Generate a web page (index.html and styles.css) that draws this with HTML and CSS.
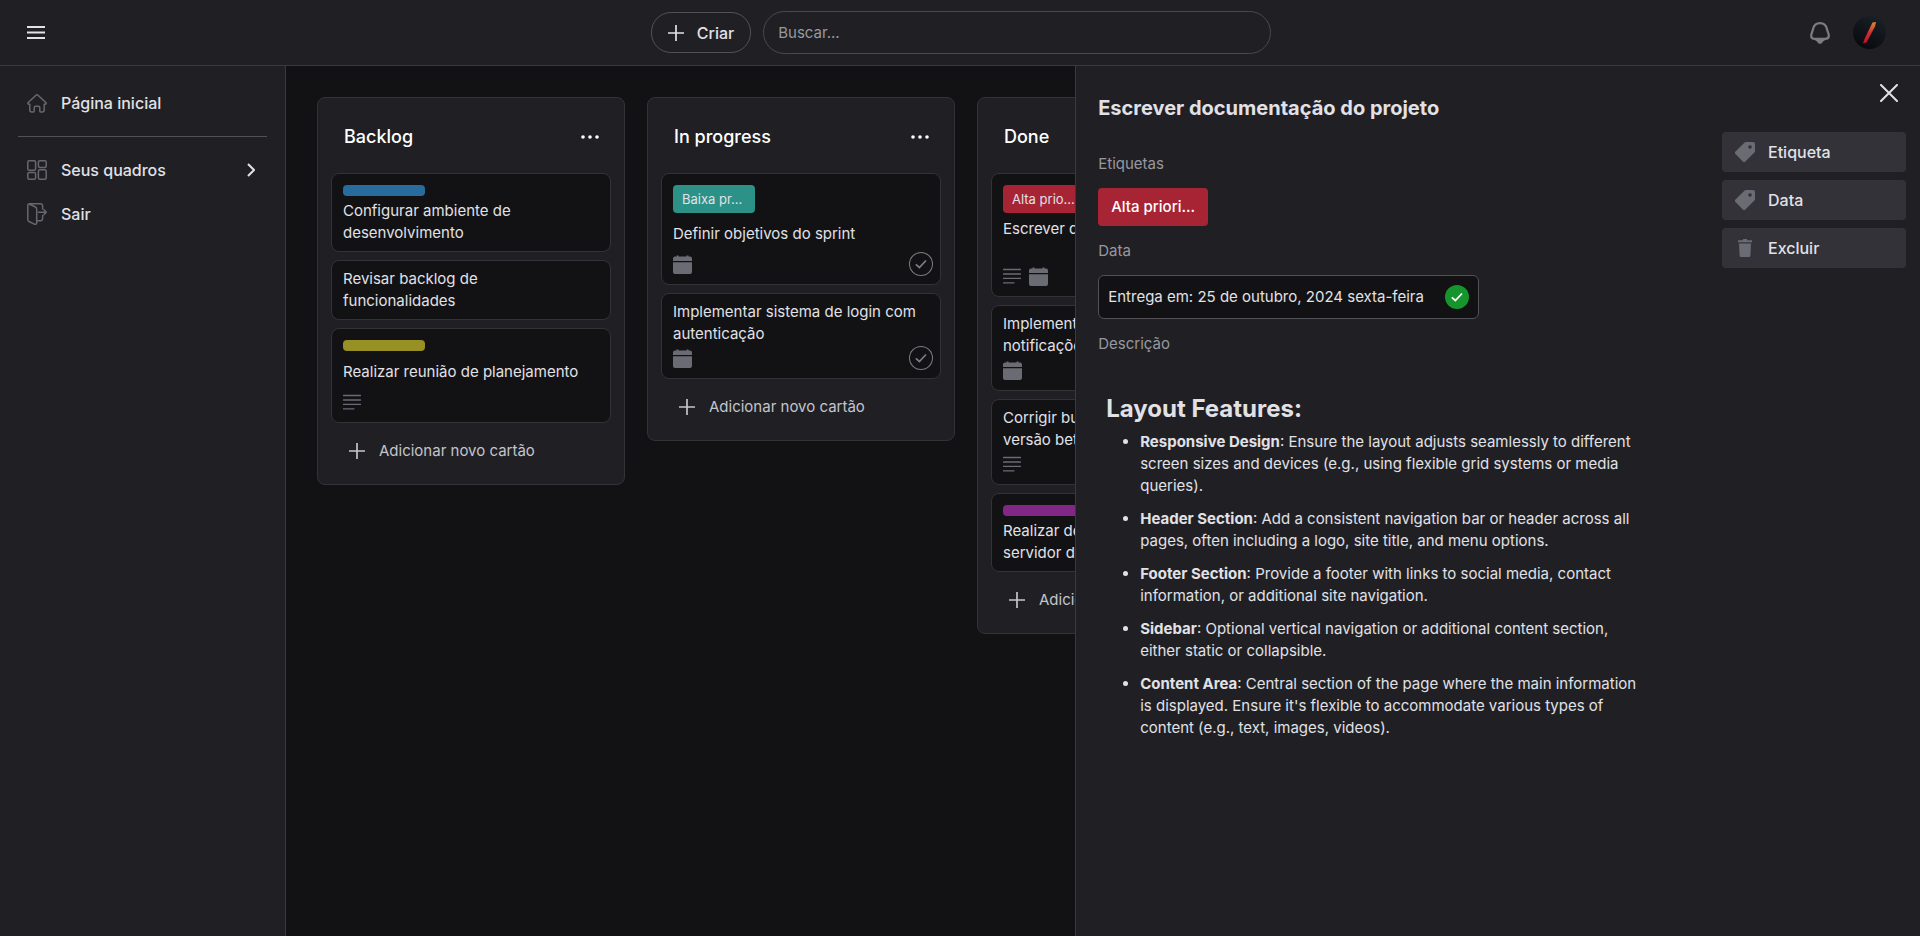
FILE: index.html
```html
<!DOCTYPE html>
<html lang="pt-BR">
<head>
<meta charset="utf-8">
<title>Quadro</title>
<link rel="stylesheet" href="styles.css">
</head>
<body>
<svg class="sprite" aria-hidden="true">
  <symbol id="plus" viewBox="0 0 16 16"><path d="M8 0v16M0 8h16" fill="none" stroke="currentColor" stroke-width="1.700"/></symbol>
  <symbol id="dots" viewBox="0 0 18 4"><circle cx="2" cy="2" r="1.800"/><circle cx="9" cy="2" r="1.800"/><circle cx="16" cy="2" r="1.800"/></symbol>
  <symbol id="lines" viewBox="0 0 18 16"><path d="M.5 1.500h17M.5 6h17M.5 10.300h17M.5 14.800h10.500" fill="none" stroke="currentColor" stroke-width="1.300" stroke-linecap="round"/></symbol>
  <symbol id="calendar" viewBox="0 0 19 19"><path d="M0 6V3.500A2 2 0 0 1 2 1.500h1.500V.5h2v1h8v-1h2v1H17a2 2 0 0 1 2 2V6zM0 7.200h19V17a2 2 0 0 1-2 2H2a2 2 0 0 1-2-2z"/></symbol>
  <symbol id="check" viewBox="0 0 24 24"><path d="M6.800 12.300l3.600 3.200L17 8.500" fill="none" stroke="currentColor" stroke-width="1.700"/></symbol>
  <symbol id="tag" viewBox="0 0 20 20"><path fill-rule="evenodd" d="M11 0h7a2 2 0 0 1 2 2v7q0 .8-.6 1.400l-9 9a1.800 1.800 0 0 1-2.600 0L.5 12.100a1.800 1.800 0 0 1 0-2.600L9.600.6Q10.200 0 11 0zM15 3.200a1.800 1.800 0 1 0 0 3.600 1.800 1.800 0 0 0 0-3.600z"/></symbol>
  <symbol id="trash" viewBox="0 0 14 18"><path d="M5 0h4v1.300h5v2H0v-2h5zM1 4.500h12l-.6 12a1.500 1.500 0 0 1-1.500 1.500H3.100a1.500 1.500 0 0 1-1.500-1.500z"/></symbol>
</svg>

<header class="topbar">
  <button class="icon-button" aria-label="Menu">
    <svg width="18" height="13" viewBox="0 0 18 13"><path d="M0 1h18M0 6.500h18M0 12h18" stroke="currentColor" stroke-width="1.800"/></svg>
  </button>
  <div class="topbar-center">
    <button class="create"><svg width="16" height="16"><use href="#plus"/></svg>Criar</button>
    <input class="search" type="search" placeholder="Buscar..." aria-label="Buscar">
  </div>
  <div class="topbar-user">
    <button class="icon-button bell" aria-label="Notificações">
      <svg width="20" height="22" viewBox="0 0 20 22"><path d="M10 1.200C6 1.200 3.700 3.800 2.900 7.500 2.300 10.300 1.200 11.500 1.200 13.700c0 2.300 1.500 3.200 3.800 3.200h10c2.300 0 3.800-.9 3.800-3.200 0-2.200-1.100-3.400-1.700-6.200C16.300 3.800 14 1.200 10 1.200z" fill="none" stroke="currentColor" stroke-width="2.200"/><path d="M3.500 16h13q-1 2.800-3.800 3.800c-.8 2.700-4.600 2.700-5.400 0Q4.500 18.800 3.500 16z" fill="currentColor"/></svg>
    </button>
    <button class="icon-button" aria-label="Perfil">
      <svg width="33" height="33" viewBox="0 0 33 33"><defs><linearGradient id="night" x1=".8" y1="0" x2=".3" y2="1"><stop offset="0" stop-color="#1b2129"/><stop offset="1" stop-color="#07090c"/></linearGradient><linearGradient id="flame" x1="0" y1="0" x2="0" y2="1"><stop offset="0" stop-color="#d98a35"/><stop offset=".5" stop-color="#d03030"/><stop offset="1" stop-color="#c00d2c"/></linearGradient></defs><circle cx="16.500" cy="16.500" r="16.500" fill="url(#night)"/><path d="M19.500 6.500l3.500-.5-1 4.500-8.500 16-3.500.8 1.500-4.300z" fill="url(#flame)"/></svg>
    </button>
  </div>
</header>

<div class="workspace">
  <nav class="sidebar">
    <a class="nav-link" href="#"><span class="nav-icon"><svg width="20" height="19" viewBox="0 0 20 19"><path d="M9 1.200a1.500 1.500 0 0 1 2 0l7.800 7.300c.7.700.2 1.700-.7 1.700h-.9v5.800a2 2 0 0 1-2 2h-1.400a1 1 0 0 1-1-1v-3.200a1.500 1.500 0 0 0-1.500-1.500H8.700a1.500 1.500 0 0 0-1.500 1.500V17a1 1 0 0 1-1 1H4.800a2 2 0 0 1-2-2v-5.800h-.9c-.9 0-1.400-1-.7-1.700z"/></svg></span>Página inicial</a>
    <hr class="divider">
    <a class="nav-link" href="#"><span class="nav-icon"><svg width="20" height="20" viewBox="0 0 20 20"><rect x=".8" y=".8" width="7.800" height="9.400" rx="1.500"/><rect x="11.400" y=".8" width="7.800" height="6.600" rx="1.500"/><rect x=".8" y="12.600" width="7.800" height="6.600" rx="1.500"/><rect x="11.400" y="9.800" width="7.800" height="9.400" rx="1.500"/></svg></span>Seus quadros<svg class="chevron" width="8" height="14" viewBox="0 0 8 14"><path d="M1 1l6 6-6 6"/></svg></a>
    <a class="nav-link" href="#"><span class="nav-icon"><svg width="20" height="22" viewBox="0 0 20 22"><path d="M2.600.8h11a2 2 0 0 1 2 2V6M15.600 12.500v3.200a2 2 0 0 1-2 2H9.700M2 1l6 2.700q1.700.8 1.700 2.500v13.300c0 1.500-1 2.200-2.300 1.600l-5-2.300Q.8 18 .8 16.200V2.400Q.8.800 2.600.8M11.500 9.200h7.700M17 6.800l2.300 2.400L17 11.600"/></svg></span>Sair</a>
  </nav>

  <main class="board">
    <section class="column">
      <header class="column-head"><h2>Backlog</h2><button class="icon-button" aria-label="Opções"><svg width="18" height="4" fill="currentColor"><use href="#dots"/></svg></button></header>
      <article class="card"><span class="label bar blue"></span><p class="card-title">Configurar ambiente de desenvolvimento</p></article>
      <article class="card"><p class="card-title">Revisar backlog de<br>funcionalidades</p></article>
      <article class="card"><span class="label bar olive"></span><p class="card-title single">Realizar reunião de planejamento</p><div class="card-foot"><svg width="18" height="16"><use href="#lines"/></svg></div></article>
      <button class="add-card"><svg width="16" height="16"><use href="#plus"/></svg>Adicionar novo cartão</button>
    </section>

    <section class="column">
      <header class="column-head"><h2>In progress</h2><button class="icon-button" aria-label="Opções"><svg width="18" height="4" fill="currentColor"><use href="#dots"/></svg></button></header>
      <article class="card"><span class="label teal">Baixa pr...</span><p class="card-title single">Definir objetivos do sprint</p><div class="card-foot"><svg width="19" height="19" fill="currentColor"><use href="#calendar"/></svg><button class="done-toggle" aria-label="Concluir"><svg width="24" height="24"><use href="#check"/></svg></button></div></article>
      <article class="card"><p class="card-title">Implementar sistema de login com autenticação</p><div class="card-foot"><svg width="19" height="19" fill="currentColor"><use href="#calendar"/></svg><button class="done-toggle" aria-label="Concluir"><svg width="24" height="24"><use href="#check"/></svg></button></div></article>
      <button class="add-card"><svg width="16" height="16"><use href="#plus"/></svg>Adicionar novo cartão</button>
    </section>

    <section class="column">
      <header class="column-head"><h2>Done</h2></header>
      <article class="card"><span class="label red">Alta prio...</span><p class="card-title tall">Escrever documentação do projeto</p><div class="card-foot"><svg width="18" height="16"><use href="#lines"/></svg><svg width="19" height="19" fill="currentColor"><use href="#calendar"/></svg></div></article>
      <article class="card"><p class="card-title">Implementar<br>notificações</p><div class="card-foot"><svg width="19" height="19" fill="currentColor"><use href="#calendar"/></svg></div></article>
      <article class="card"><p class="card-title">Corrigir bugs<br>versão beta</p><div class="card-foot"><svg width="18" height="16"><use href="#lines"/></svg></div></article>
      <article class="card"><span class="label bar purple"></span><p class="card-title">Realizar deploy<br>servidor de</p></article>
      <button class="add-card"><svg width="16" height="16"><use href="#plus"/></svg>Adicionar novo cartão</button>
    </section>
  </main>

  <aside class="drawer">
    <div class="details">
      <h1>Escrever documentação do projeto</h1>
      <h3 class="field">Etiquetas</h3>
      <span class="tag red">Alta priori...</span>
      <h3 class="field">Data</h3>
      <div class="due">Entrega em: 25 de outubro, 2024 sexta-feira<button class="done-toggle checked" aria-label="Concluído"><svg width="24" height="24"><use href="#check"/></svg></button></div>
      <h3 class="field">Descrição</h3>
      <div class="description">
        <h2>Layout Features:</h2>
        <ul>
          <li><strong>Responsive Design</strong>: Ensure the layout adjusts seamlessly to different screen sizes and devices (e.g., using flexible grid systems or media queries).</li>
          <li><strong>Header Section</strong>: Add a consistent navigation bar or header across all pages, often including a logo, site title, and menu options.</li>
          <li><strong>Footer Section</strong>: Provide a footer with links to social media, contact information, or additional site navigation.</li>
          <li><strong>Sidebar</strong>: Optional vertical navigation or additional content section, either static or collapsible.</li>
          <li><strong>Content Area</strong>: Central section of the page where the main information is displayed. Ensure it's flexible to accommodate various types of content (e.g., text, images, videos).</li>
        </ul>
      </div>
    </div>
    <div class="actions">
      <button class="icon-button close" aria-label="Fechar"><svg width="18" height="18" viewBox="0 0 18 18"><path d="M1 1l16 16M17 1L1 17" stroke="currentColor" stroke-width="2" stroke-linecap="round"/></svg></button>
      <button class="action"><svg width="20" height="20"><use href="#tag"/></svg>Etiqueta</button>
      <button class="action"><svg width="20" height="20"><use href="#tag"/></svg>Data</button>
      <button class="action"><svg width="20" height="18"><use href="#trash"/></svg>Excluir</button>
    </div>
  </aside>
</div>
</body>
</html>
```
FILE: styles.css
```css
* { box-sizing: border-box; }

body {
  margin: 0;
  height: 100vh;
  display: flex;
  flex-direction: column;
  overflow: hidden;
  background: #121214;
  color: #e1e1e6;
  font: 15px/22px Inter, "Liberation Sans", sans-serif;
}

h1, h2, h3, p, ul { margin: 0; padding: 0; }
button { font: inherit; color: inherit; cursor: pointer; }
svg { flex: none; display: block; }

.sprite { position: absolute; width: 0; height: 0; }

.icon-button {
  display: flex;
  padding: 0;
  border: 0;
  background: none;
}

/* Top bar */
.topbar {
  display: grid;
  grid-template-columns: 1fr auto 1fr;
  align-items: center;
  height: 66px;
  padding: 0 34px 0 27px;
  background: #202024;
  border-bottom: 1px solid #3a3a3e;
}

.topbar-center { display: flex; align-items: center; gap: 12px; margin-left: 9px; }

.create {
  display: flex;
  align-items: center;
  gap: 13px;
  height: 41px;
  padding: 0 16px;
  border: 1px solid #515156;
  border-radius: 20px;
  background: none;
  font-size: 16px;
  font-weight: 500;
}

.search {
  width: 508px;
  height: 43px;
  padding: 0 14px;
  border: 1px solid #4a4a4e;
  border-radius: 22px;
  background: none;
  color: inherit;
  font: inherit;
}
.search::placeholder { color: #98989f; opacity: 1; }

.topbar-user { display: flex; align-items: center; justify-content: flex-end; gap: 23px; }
.bell { color: #7c7c82; }

/* Page body */
.workspace {
  flex: 1;
  min-height: 0;
  display: flex;
}

.sidebar {
  flex: none;
  width: 286px;
  padding: 15px 18px;
  background: #202024;
  border-right: 1px solid #3a3a3e;
}

.nav-link {
  display: flex;
  align-items: center;
  gap: 14px;
  height: 44px;
  padding: 0 12px 0 9px;
  color: inherit;
  font-size: 16px;
  font-weight: 500;
  text-decoration: none;
}

.nav-icon svg { fill: none; stroke: #67676f; stroke-width: 1.5; stroke-linejoin: round; stroke-linecap: round; }
.chevron { margin-left: auto; fill: none; stroke: currentColor; stroke-width: 2; }
.divider { height: 1px; margin: 11px 0; border: 0; background: #515156; }

/* Board */
.board {
  flex: 1;
  min-width: 0;
  display: flex;
  align-items: flex-start;
  gap: 22px;
  padding: 31px;
  overflow: hidden;
}

.column {
  flex: none;
  width: 308px;
  display: flex;
  flex-direction: column;
  gap: 8px;
  padding: 13px;
  background: #202024;
  border: 1px solid #333337;
  border-radius: 8px;
}

.column-head {
  display: flex;
  align-items: center;
  justify-content: space-between;
  height: 54px;
  padding: 0 12px 2px 13px;
  color: #fff;
}
.column-head h2 { font-size: 18px; font-weight: 500; }

.card {
  padding: 3px 11px 7px;
  background: #121214;
  border: 1px solid #333337;
  border-radius: 8px;
}

.label {
  display: block;
  width: 82px;
  height: 28px;
  margin-top: 8px;
  padding: 0 9px;
  border-radius: 4px;
  font-size: 13px;
  line-height: 28px;
  white-space: nowrap;
}
.bar { height: 11px; }

.blue { background: #276c9c; }
.olive { background: #979024; }
.teal { background: #2c9186; }
.red { background: #a72435; }
.purple { background: #812886; }

.card-title { padding-top: 4px; }
.card-title.single { padding: 10px 0 6px; }
.card-title.tall { padding: 5px 0 23px; }

.card-foot {
  display: flex;
  align-items: center;
  gap: 8px;
  height: 26px;
  color: #6b6b74;
}

.done-toggle {
  display: flex;
  margin: 0 -4px 0 auto;
  padding: 0;
  border: 0;
  border-radius: 50%;
  background: none;
  box-shadow: inset 0 0 0 1px #7c7c82;
  color: #7c7c82;
}

.done-toggle.checked { margin: 0; background: #16952c; box-shadow: none; color: #fff; }

.add-card {
  display: flex;
  align-items: center;
  gap: 14px;
  height: 40px;
  padding: 0 18px;
  border: 0;
  background: none;
  color: #c4c4cc;
}

/* Card details */
.drawer {
  flex: none;
  width: 44%;
  display: flex;
  gap: 62px;
  padding: 0 14px 0 22px;
  background: #202024;
  border-left: 1px solid #3a3a3e;
}

.details { flex: 1; min-width: 0; padding-top: 31px; }
.details h1 { font-size: 20px; line-height: 22px; }

.field {
  margin: 14px 0 13px;
  color: #98989f;
  font-size: 15px;
  font-weight: 400;
}
h1 + .field { margin-top: 34px; }

.tag {
  display: block;
  width: 110px;
  padding: 8px 13px;
  border-radius: 4px;
  color: #fff;
  font-weight: 500;
  white-space: nowrap;
}

.due {
  display: flex;
  align-items: center;
  justify-content: space-between;
  width: 381px;
  height: 44px;
  padding: 0 9px;
  background: #121214;
  border: 1px solid #515156;
  border-radius: 6px;
}

.description { padding: 25px 16px 0 8px; }
.description h2 { font-size: 24px; line-height: 32px; }
.description ul { padding: 6px 0 0 34px; }
.description li { margin-bottom: 11px; }

.actions {
  flex: none;
  width: 184px;
  display: flex;
  flex-direction: column;
  gap: 8px;
  padding-top: 18px;
}

.close { align-self: flex-end; margin: 0 8px 22px 0; }

.action {
  display: flex;
  align-items: center;
  gap: 13px;
  height: 40px;
  padding: 0 13px;
  border: 0;
  border-radius: 4px;
  background: #323238;
  font-size: 16px;
  font-weight: 500;
}
.action svg { fill: #6b6b74; }
```
